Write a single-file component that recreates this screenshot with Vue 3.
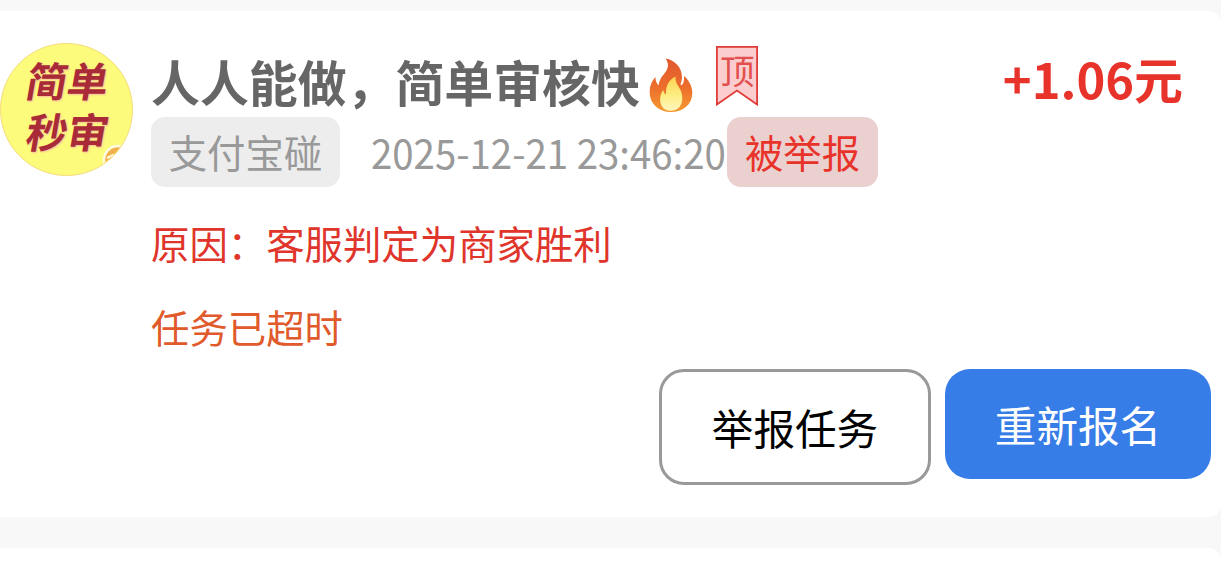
<script setup>
import { ref } from 'vue'

const task = ref({
  title: '人人能做，简单审核快',
  price: '+1.06元',
  category: '支付宝碰',
  time: '2025-12-21 23:46:20',
  status: '被举报',
  reason: '原因：客服判定为商家胜利',
  tip: '任务已超时',
})

const avatarLines = ['简单', '秒审']
</script>

<template>
  <div class="list">
    <div class="card">
      <div class="avatar">
        <span v-for="line in avatarLines" :key="line">{{ line }}</span>
        <svg class="corner" width="32" height="32" viewBox="0 0 32 32">
          <circle cx="16" cy="16" r="14" fill="#f2b04c" stroke="#fffbe0" stroke-width="2.5" />
          <path d="M5 14L11 11L14 13L18 10" fill="none" stroke="#fffbe0" stroke-width="2" />
        </svg>
      </div>

      <div class="content">
        <div class="header">
          <span class="title">{{ task.title }}</span>
          <svg class="fire" width="44" height="54" viewBox="0 0 44 54">
            <defs>
              <linearGradient id="outer" x1="0" y1="0" x2="0" y2="1">
                <stop offset="0" stop-color="#e2572f" />
                <stop offset="0.55" stop-color="#ec6f2c" />
                <stop offset="1" stop-color="#f59a30" />
              </linearGradient>
              <linearGradient id="inner" x1="0" y1="0" x2="0" y2="1">
                <stop offset="0" stop-color="#fdd14f" />
                <stop offset="0.55" stop-color="#fdee83" />
                <stop offset="1" stop-color="#fff6bf" />
              </linearGradient>
            </defs>
            <path
              d="M16.5 0.5C25 1.500 33 9 33 19C33 22 32 24.500 31.500 27C34 27 35.300 24.500 35 18C39.500 22 43.500 28 43.300 35.500C43 47 33.500 54 22 54C10 54 0.700 46 0.700 34C0.700 28 3 22.500 6.500 19C6.300 22 7.300 25 9.500 27.500C10.500 21 13.500 18 16.500 14C19.500 10 20 5 16.500 0.500Z"
              fill="url(#outer)"
            />
            <path
              d="M26.500 18.500C26 24 29 27.500 31.500 32C35.500 41 33 52.500 22 52.800C13 53 10 45 11.500 38C12 35.500 13 33.500 14.500 32C14.500 34 15.300 35.800 17 36.500C16.500 28 20 21.500 26.500 18.500Z"
              fill="url(#inner)"
            />
          </svg>
          <span class="top-flag">
            <svg width="42" height="60" viewBox="0 0 42 60">
              <path
                d="M0.900 0.900H41.100V58.500L21 44.500L0.900 58.500Z"
                fill="#fccdcf"
                stroke="#df3b38"
                stroke-width="1.8"
              />
            </svg>
            <span class="top-text">顶</span>
          </span>
          <span class="price">{{ task.price }}</span>
        </div>

        <div class="meta">
          <span class="tag">{{ task.category }}</span>
          <span class="time">{{ task.time }}</span>
          <span class="tag tag-danger">{{ task.status }}</span>
        </div>

        <div class="reason">{{ task.reason }}</div>
        <div class="tip">{{ task.tip }}</div>

        <div class="actions">
          <button class="btn btn-plain">举报任务</button>
          <button class="btn btn-primary">重新报名</button>
        </div>
      </div>
    </div>
    <div class="card"></div>
  </div>
</template>

<style>
body {
  margin: 0;
  background: #f8f8f8;
}
</style>

<style scoped>
.list {
  display: flex;
  flex-direction: column;
  gap: 31px;
  box-sizing: border-box;
  width: 1221px;
  height: 570px;
  padding-top: 11px;
  overflow: hidden;
  background: #f8f8f8;
  font-family: 'Noto Sans CJK SC', sans-serif;
}
.card {
  display: flex;
  flex-shrink: 0;
  align-items: flex-start;
  box-sizing: border-box;
  height: 506px;
  padding-top: 32px;
  border-radius: 0 12px 12px 0;
  background: #fff;
}
.avatar {
  position: relative;
  display: flex;
  flex-direction: column;
  flex-shrink: 0;
  align-items: center;
  box-sizing: border-box;
  width: 133px;
  height: 133px;
  margin-right: 18px;
  padding-top: 10px;
  overflow: hidden;
  border: 1px solid #f5dc7c;
  border-radius: 50%;
  background: #fdfb7b;
  color: #a92b38;
  font-size: 41px;
  font-weight: 700;
  line-height: 51px;
  text-shadow: 1px 1px 2px #f5b8a0;
}
.avatar span {
  transform: translateX(1px) skewX(-10deg);
}
.corner {
  position: absolute;
  right: -2px;
  bottom: -1px;
}
.content {
  flex: 1;
  min-width: 0;
}
.header {
  display: flex;
  align-items: flex-start;
  height: 74px;
  padding-right: 38px;
}
.title {
  color: #666;
  font-size: 48.9px;
  font-weight: 700;
  line-height: 76px;
}
.fire {
  margin: 15px 0 0 9px;
}
.top-flag {
  position: relative;
  width: 42px;
  height: 60px;
  margin: 3px 0 0 23px;
}
.top-flag svg {
  display: block;
}
.top-text {
  position: absolute;
  top: -1px;
  left: 4px;
  color: #e2504e;
  font-size: 34.5px;
  font-weight: 400;
  line-height: 48px;
}
.price {
  margin-left: auto;
  color: #e8332a;
  font-size: 48.9px;
  font-weight: 700;
  line-height: 70px;
}
.meta {
  display: flex;
  height: 70px;
  font-size: 38.4px;
  line-height: 68px;
  white-space: nowrap;
}
.tag {
  box-sizing: border-box;
  width: 189px;
  border-radius: 14px;
  background: #ededed;
  color: #999;
  text-align: center;
}
.time {
  width: 356px;
  margin-left: 31px;
  color: #999;
  transform: scaleY(1.06);
}
.tag-danger {
  width: 151px;
  background: #ebd0d0;
  color: #e8332a;
}
.reason,
.tip {
  color: #e0352b;
  font-size: 38.4px;
  line-height: 60px;
}
.reason {
  margin-top: 25px;
}
.tip {
  margin-top: 24px;
  color: #e05a2b;
}
.actions {
  display: flex;
  align-items: flex-start;
  justify-content: flex-end;
  gap: 14px;
  margin-top: 13px;
  padding-right: 10px;
}
.btn {
  box-sizing: border-box;
  padding: 0;
  border: none;
  border-radius: 25px;
  font-family: inherit;
  font-size: 41.6px;
  line-height: 60px;
}
.btn-plain {
  width: 272px;
  height: 116px;
  border: 3px solid #999;
  background: #fff;
  color: #000;
}
.btn-primary {
  width: 266px;
  height: 110px;
  background: #377de8;
  color: #fff;
}
</style>
